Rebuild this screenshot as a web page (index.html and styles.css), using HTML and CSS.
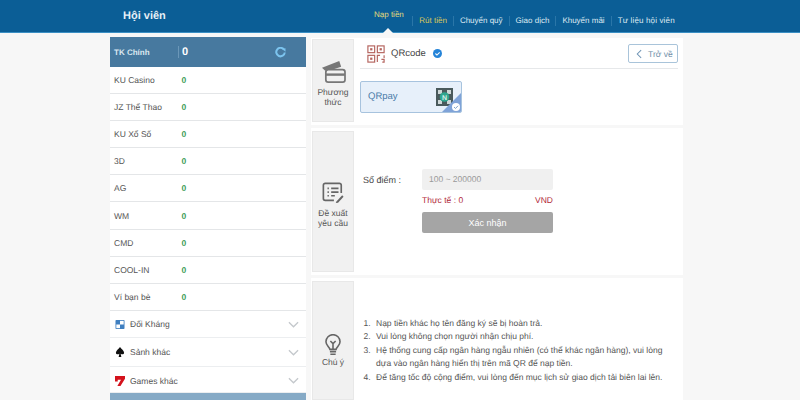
FILE: index.html
```html
<!DOCTYPE html>
<html lang="vi">
<head>
<meta charset="utf-8">
<title>Hội viên</title>
<link rel="stylesheet" href="styles.css">
</head>
<body>
<header class="topbar">
  <div class="topbar-inner">
    <div class="brand">Hội viên</div>
    <nav class="nav">
      <a class="nav-item nav-active">Nạp tiền</a>
      <a class="nav-item nav-gold">Rút tiền</a>
      <a class="nav-item">Chuyển quỹ</a>
      <a class="nav-item">Giao dịch</a>
      <a class="nav-item">Khuyến mãi</a>
      <a class="nav-item nav-last">Tư liệu hội viên</a>
    </nav>
  </div>
</header>
<div class="page">
  <aside class="sidebar">
    <div class="main-account">
      <span class="main-label">TK Chính</span>
      <span class="main-value">0</span>
      <svg class="refresh" width="11" height="11" viewBox="0 0 14 14"><path d="M11.600 3.600A5.400 5.400 0 1 0 12.400 7" fill="none" stroke="#7cc4ee" stroke-width="2.600"/><path d="M9.200 2.600l4.200-1v4.400z" fill="#7cc4ee"/></svg>
    </div>
    <div class="acc"><span class="acc-name">KU Casino</span><span class="acc-val">0</span></div>
    <div class="acc"><span class="acc-name">JZ Thể Thao</span><span class="acc-val">0</span></div>
    <div class="acc"><span class="acc-name">KU Xổ Số</span><span class="acc-val">0</span></div>
    <div class="acc"><span class="acc-name">3D</span><span class="acc-val">0</span></div>
    <div class="acc"><span class="acc-name">AG</span><span class="acc-val">0</span></div>
    <div class="acc"><span class="acc-name">WM</span><span class="acc-val">0</span></div>
    <div class="acc"><span class="acc-name">CMD</span><span class="acc-val">0</span></div>
    <div class="acc"><span class="acc-name">COOL-IN</span><span class="acc-val">0</span></div>
    <div class="acc"><span class="acc-name">Ví bạn bè</span><span class="acc-val">0</span></div>
    <div class="group group-first">
      <svg class="group-icon" width="9" height="9" viewBox="0 0 11 11"><rect width="11" height="11" rx="1" fill="#3f7fc0"/><rect x="5.500" y="1" width="4.500" height="4.500" fill="#fff"/><rect x="1" y="5.500" width="4.500" height="4.500" fill="#fff"/></svg>
      <span class="group-name">Đối Kháng</span>
      <svg class="chev" width="11" height="7" viewBox="0 0 12 7"><path d="M1 1l5 5 5-5" fill="none" stroke="#c4c8cc" stroke-width="1.400"/></svg>
    </div>
    <div class="group group-tall">
      <svg class="group-icon" width="9" height="10" viewBox="0 0 11 11"><path d="M5.500 0C7 2.500 10 3.800 10 6.200 10 8 7.800 8.600 6.200 7.400L7 11H4l.8-3.600C3.200 8.600 1 8 1 6.200 1 3.800 4 2.500 5.500 0z" fill="#111"/></svg>
      <span class="group-name">Sảnh khác</span>
      <svg class="chev" width="11" height="7" viewBox="0 0 12 7"><path d="M1 1l5 5 5-5" fill="none" stroke="#c4c8cc" stroke-width="1.400"/></svg>
    </div>
    <div class="group group-last">
      <svg class="group-icon" width="10" height="10" viewBox="0 0 11 11"><path d="M0 0h11v3L6 11H2.600l4-7H3v2H0z" fill="#d4121c"/></svg>
      <span class="group-name">Games khác</span>
      <svg class="chev" width="11" height="7" viewBox="0 0 12 7"><path d="M1 1l5 5 5-5" fill="none" stroke="#c4c8cc" stroke-width="1.400"/></svg>
    </div>
    <div class="side-foot"></div>
  </aside>
  <main class="content">
    <section class="panel panel-method">
      <div class="tab">
        <svg class="tab-icon" width="25" height="23" viewBox="0 0 26 24"><path d="M1 8L19 1l2 6-12 4H4z" fill="#777"/><rect x="5" y="10" width="20" height="13" rx="2.500" fill="#f1f1f1" stroke="#777" stroke-width="1.800"/><rect x="5" y="14" width="20" height="2.500" fill="#777"/></svg>
        <span>Phương<br>thức</span>
      </div>
      <div class="panel-body method-body">
        <div class="method-head">
          <svg width="20" height="18" viewBox="0 0 20 20" fill="none" stroke="#b5655f" stroke-width="1.300"><rect x="1" y="1" width="7.500" height="7.500"/><rect x="11.500" y="1" width="7.500" height="7.500"/><rect x="1" y="11.500" width="7.500" height="7.500"/><path d="M11.500 19v-7.500h3M19 11.500v3M16 16h3v3h-2"/><rect x="3.500" y="3.500" width="2.500" height="2.500" fill="#b5655f" stroke="none"/><rect x="14" y="3.500" width="2.500" height="2.500" fill="#b5655f" stroke="none"/><rect x="3.500" y="14" width="2.500" height="2.500" fill="#b5655f" stroke="none"/></svg>
          <span class="method-title">QRcode</span>
          <svg class="verified" width="9" height="9" viewBox="0 0 10 10"><circle cx="5" cy="5" r="5" fill="#2584d8"/><path d="M2.700 5l1.700 1.700 3-3" fill="none" stroke="#fff" stroke-width="1.200"/></svg>
          <a class="back"><svg width="6" height="10" viewBox="0 0 7 11"><path d="M6 1L1.500 5.500 6 10" fill="none" stroke="#6f94b5" stroke-width="1.200"/></svg>Trở về</a>
        </div>
        <div class="qr-card">
          <span>QRpay</span>
          <svg class="qr-thumb" width="17" height="18" viewBox="0 0 17 18"><rect width="17" height="18" fill="#4a5a5c"/><rect x="2" y="2" width="4" height="4" fill="#cfd8d8"/><rect x="11" y="2" width="4" height="4" fill="#cfd8d8"/><rect x="2" y="12" width="4" height="4" fill="#cfd8d8"/><rect x="11" y="12" width="4" height="4" fill="#cfd8d8"/><circle cx="8.500" cy="9" r="4.800" fill="#2fa58e"/><text x="8.500" y="11.500" text-anchor="middle" class="qr-n">N</text></svg>
          <div class="corner"></div>
          <svg class="corner-check" width="8" height="8" viewBox="0 0 8 8"><circle cx="4" cy="4" r="4" fill="#fff"/><path d="M2 4l1.500 1.500L6 2.800" fill="none" stroke="#7fa3cc" stroke-width="1"/></svg>
        </div>
      </div>
    </section>
    <section class="panel panel-form">
      <div class="tab">
        <svg class="tab-icon" width="24" height="22" viewBox="0 0 24 24" fill="none" stroke="#666" stroke-width="1.800"><path d="M21 12V3.500A2 2 0 0 0 19 1.500H3.500a2 2 0 0 0-2 2V18a2 2 0 0 0 2 2H13"/><path d="M6 7h1.500M10 7h8M6 11h1.500M10 11h8M6 15h1.500M10 15h4"/><path d="M16 21l6-6.500 1.500 1.500-6 6.500-2.500.5z" fill="#666" stroke="none"/></svg>
        <span>Đề xuất<br>yêu cầu</span>
      </div>
      <div class="panel-body form-body">
        <label class="form-label">Số điểm :</label>
        <div class="form-fields">
          <div class="input">100 ~ 200000</div>
          <div class="actual"><span>Thực tế : 0</span><span>VND</span></div>
          <button class="submit">Xác nhận</button>
        </div>
      </div>
    </section>
    <section class="panel panel-notes">
      <div class="tab tab-notes">
        <svg class="tab-icon" width="18" height="22" viewBox="0 0 18 25" fill="none" stroke="#666" stroke-width="1.800"><path d="M5.500 17.500C5 14.500 1 13 1 8.800A8 8 0 0 1 17 8.800c0 4.200-4 5.700-4.500 8.700z"/><path d="M6 8l3 3 3-3M9 11v6"/><path d="M5.500 20h7M6 23h6"/></svg>
        <span>Chú ý</span>
      </div>
      <div class="panel-body notes-body">
        <ol class="notes">
          <li>Nạp tiền khác họ tên đăng ký sẽ bị hoàn trả.</li>
          <li>Vui lòng không chọn người nhận chịu phí.</li>
          <li>Hệ thống cung cấp ngân hàng ngẫu nhiên (có thể khác ngân hàng), vui lòng dựa vào ngân hàng hiển thị trên mã QR để nạp tiền.</li>
          <li>Để tăng tốc độ cộng điểm, vui lòng đến mục lịch sử giao dịch tải biên lai lên.</li>
        </ol>
      </div>
    </section>
  </main>
</div>
</body>
</html>
```
FILE: styles.css
```css
* { box-sizing: border-box; }
html, body { margin: 0; height: 400px; overflow: hidden; }
body { background: #f7f7f7; font-family: "Liberation Sans", Arial, sans-serif; color: #444; font-size: 8.5px; text-rendering: geometricPrecision; }
.topbar { height: 33px; background: #0b5e96; border-bottom: 1px solid #3a8fc4; }
.topbar-inner { margin-left: 110px; display: flex; align-items: center; height: 32px; }
.brand { color: #e6f0f7; font-weight: bold; font-size: 11px; padding-left: 13px; width: 264px; }
.nav { display: flex; align-items: center; height: 100%; }
.nav-item { color: #dfeaf2; font-size: 8px; padding: 0 6px; line-height: 10px; margin-top: 9px; border-left: 1px solid #2a76a8; white-space: nowrap; }
.nav-active { color: #e6dc7a; margin-top: 0; padding: 0 8.5px 0 0; border-left: 0; position: relative; top: -1px; }
.nav-active::after { content: ""; position: absolute; left: 9px; top: 18px; border: 5px solid transparent; border-top: 0; border-bottom-color: #f7f7f7; }
.nav-gold { color: #dcc95a; }
.nav-last { letter-spacing: 0.15px; }
.page { display: flex; height: 367px; padding-left: 110px; align-items: flex-start; }
.sidebar { width: 196px; margin-top: 4px; flex: none; background: #fff; }
.main-account { height: 30px; background: #47799f; display: flex; align-items: center; color: #fff; padding-left: 4px; }
.main-label { width: 64px; font-weight: bold; font-size: 8px; color: #dbe8f1; }
.main-value { width: 97px; font-weight: bold; font-size: 11px; border-left: 1px solid #6b97b8; padding-left: 3px; }
.acc { height: 27.1px; display: flex; align-items: center; padding-left: 4px; border-bottom: 1px solid #e4e6e8; }
.acc-name { width: 67.5px; color: #555; }
.acc-val { color: #3d9c57; font-weight: bold; }
.group { height: 27.3px; display: flex; align-items: center; padding: 0 7px 0 5px; border-bottom: 1px solid #eceef0; }
.group-first { padding-top: 1px; }
.group-tall { height: 29px; }
.group-last { height: 26px; padding-top: 2px; }
.group-icon { width: 10px; flex: none; }
.group-name { margin-left: 5px; flex: 1; color: #555; }
.side-foot { height: 7px; background: #86aac6; }
.content { width: 372px; margin-left: 5px; margin-top: 5px; flex: none; display: flex; flex-direction: column; gap: 3px; }
.panel { display: flex; background: #fff; padding: 3px 0 3px 1px; }
.panel-method { height: 87px; padding-top: 1px; }
.panel-form { height: 147px; }
.panel-notes { height: 122px; padding-bottom: 0; }
.tab { width: 42px; flex: none; background: #f1f1f1; border: 1px solid #e8e8e8; display: flex; flex-direction: column; align-items: center; justify-content: center; text-align: center; line-height: 10px; color: #555; padding-top: 6px; }
.tab-icon { margin-bottom: 4px; }
.panel-body { flex: 1; min-width: 0; }
.method-body { padding: 0 5px 0 6px; }
.method-head { height: 30px; display: flex; align-items: center; gap: 5px; border-bottom: 1px solid #e6e8ea; padding: 0 0 0 6px; }
.method-title { font-size: 9.5px; color: #444; }
.verified { margin-left: 2px; }
.back { margin-left: auto; width: 50px; height: 19px; border: 1px solid #a9c4da; border-radius: 2px; display: flex; align-items: center; gap: 6px; padding-left: 7px; color: #6f8ea8; }
.qr-card { position: relative; width: 102px; height: 32px; margin-top: 12px; background: #e7f0fa; border: 1px solid #a7c3de; border-radius: 2px; display: flex; align-items: center; justify-content: space-between; padding: 0 8px 2px 7px; overflow: hidden; color: #4a7ba8; font-size: 9.5px; }
.qr-thumb { position: relative; z-index: 0; margin-top: 1px; }
.qr-n { font: bold 7px "Liberation Sans", Arial, sans-serif; fill: #d8f2ea; }
.corner { position: absolute; right: 0; bottom: 0; width: 0; height: 0; border-style: solid; border-width: 0 0 19px 19px; border-color: transparent transparent #7fa3d8 transparent; }
.corner-check { position: absolute; right: 1px; bottom: 1px; }
.form-body { display: flex; padding: 38px 0 0 9px; }
.form-label { width: 59px; font-size: 9px; color: #444; padding-top: 6px; }
.form-fields { width: 131px; }
.input { height: 21px; background: #f0f0f0; border-radius: 2px; padding: 0 7px; line-height: 21px; color: #999; }
.actual { display: flex; justify-content: space-between; color: #b22a3a; height: 22px; line-height: 20px; }
.submit { display: block; width: 100%; height: 21px; border: 0; border-radius: 2px; background: #a5a5a5; color: #fff; font: 9px "Liberation Sans", Arial, sans-serif; }
.tab-notes { justify-content: flex-start; padding-top: 52px; }
.tab-notes .tab-icon { margin-bottom: 1px; }
.notes-body { padding: 36px 18px 0 0; }
.notes { margin: 0; padding: 0 0 0 19px; line-height: 13.4px; color: #555; }
.notes li { padding-left: 3px; }
```
